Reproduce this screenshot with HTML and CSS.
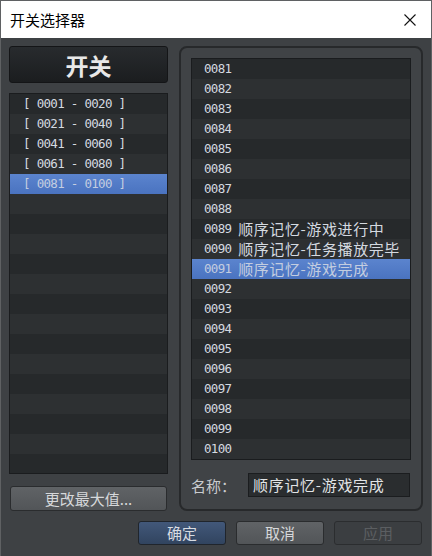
FILE: index.html
```html
<!DOCTYPE html>
<html>
<head>
<meta charset="utf-8">
<title>开关选择器</title>
<link rel="stylesheet" href="styles.css">
</head>
<body>
<div class="window">
  <div class="titlebar">
    <span class="title">开关选择器</span>
    <svg class="close" width="12" height="12" viewBox="0 0 12 12"><path d="M0.5 0.5 L11.5 11.5 M11.5 0.5 L0.5 11.5" stroke="#111" stroke-width="1.1" fill="none"/></svg>
  </div>
  <div class="content">
    <div class="main">
      <div class="left">
        <div class="header">开关</div>
        <div class="list left-list">
          <div class="row"><span class="num">[ 0001 - 0020 ]</span></div>
          <div class="row"><span class="num">[ 0021 - 0040 ]</span></div>
          <div class="row"><span class="num">[ 0041 - 0060 ]</span></div>
          <div class="row"><span class="num">[ 0061 - 0080 ]</span></div>
          <div class="row selected"><span class="num">[ 0081 - 0100 ]</span></div>
          <div class="row"></div>
          <div class="row"></div>
          <div class="row"></div>
          <div class="row"></div>
          <div class="row"></div>
          <div class="row"></div>
          <div class="row"></div>
          <div class="row"></div>
          <div class="row"></div>
          <div class="row"></div>
          <div class="row"></div>
          <div class="row"></div>
          <div class="row"></div>
          <div class="row"></div>
        </div>
        <button class="btn">更改最大值...</button>
      </div>
      <div class="frame">
        <div class="list right-list">
          <div class="row"><span class="num">0081</span></div>
          <div class="row"><span class="num">0082</span></div>
          <div class="row"><span class="num">0083</span></div>
          <div class="row"><span class="num">0084</span></div>
          <div class="row"><span class="num">0085</span></div>
          <div class="row"><span class="num">0086</span></div>
          <div class="row"><span class="num">0087</span></div>
          <div class="row"><span class="num">0088</span></div>
          <div class="row"><span class="num">0089 </span><span class="name">顺序记忆-游戏进行中</span></div>
          <div class="row"><span class="num">0090 </span><span class="name">顺序记忆-任务播放完毕</span></div>
          <div class="row selected"><span class="num">0091 </span><span class="name">顺序记忆-游戏完成</span></div>
          <div class="row"><span class="num">0092</span></div>
          <div class="row"><span class="num">0093</span></div>
          <div class="row"><span class="num">0094</span></div>
          <div class="row"><span class="num">0095</span></div>
          <div class="row"><span class="num">0096</span></div>
          <div class="row"><span class="num">0097</span></div>
          <div class="row"><span class="num">0098</span></div>
          <div class="row"><span class="num">0099</span></div>
          <div class="row"><span class="num">0100</span></div>
        </div>
        <div class="name-row">
          <span class="label">名称：</span>
          <div class="input">顺序记忆-游戏完成</div>
        </div>
      </div>
    </div>
    <div class="buttons">
      <button class="btn primary">确定</button>
      <button class="btn">取消</button>
      <button class="btn disabled">应用</button>
    </div>
  </div>
</div>
</body>
</html>
```

FILE: styles.css
```css
* { box-sizing: border-box; }

html, body {
  margin: 0;
  padding: 0;
  background: #3e4144;
}

body {
  font-family: "Noto Sans CJK SC", "Noto Sans", sans-serif;
}

.window {
  width: 432px;
  height: 556px;
  display: flex;
  flex-direction: column;
  background: #3e4144;
  border: 1px solid #5f6163;
  border-bottom: none;
  overflow: hidden;
}

.titlebar {
  height: 37px;
  flex: none;
  background: #ffffff;
  display: flex;
  align-items: center;
  justify-content: space-between;
  padding: 0 15px 0 9px;
}

.title {
  font-size: 15px;
  color: #000;
  line-height: 20px;
}

.close {
  display: block;
}

.content {
  display: flex;
  flex-direction: column;
  padding: 8px 8px 0 8px;
}

.main {
  display: flex;
  gap: 11px;
  height: 465px;
}

.left {
  width: 159px;
  display: flex;
  flex-direction: column;
  gap: 10px;
}

.header {
  height: 37px;
  flex: none;
  display: flex;
  align-items: center;
  justify-content: center;
  background: linear-gradient(#282b2e, #1b1d1f);
  border: 1px solid #141517;
  border-radius: 3px;
  color: #e8e8e8;
  font-size: 23px;
  font-weight: bold;
}

.list {
  background: #25282a;
  border: 1px solid #1a1c1e;
  overflow: hidden;
}

.left-list {
  flex: 1;
  margin-bottom: 2px;
}

.row {
  height: 20px;
  line-height: 20px;
  white-space: nowrap;
  color: #d5dae0;
  display: flex;
  align-items: center;
}

.row:nth-child(odd) { background: #26292b; }
.row:nth-child(even) { background: #2d3032; }

.row.selected {
  background: linear-gradient(#5b84ce, #4a73c0);
  color: #c3cde0;
}

.left-list .row { padding-left: 13px; }
.right-list .row { padding-left: 12px; }

.num {
  font-family: "DejaVu Sans Mono", monospace;
  font-size: 12.5px;
  letter-spacing: -0.7px;
  white-space: pre;
}

.name {
  font-family: "Noto Sans CJK SC", sans-serif;
  font-size: 15px;
  letter-spacing: 0.6px;
  line-height: 20px;
}

.frame {
  width: 244px;
  border: 2px solid #27292b;
  border-radius: 8px;
  background: #404346;
  padding: 10px 10px 12px 10px;
  display: flex;
  flex-direction: column;
}

.right-list {
  height: 402px;
  flex: none;
}

.name-row {
  margin-top: 13px;
  height: 24px;
  display: flex;
  align-items: center;
}

.label {
  width: 57px;
  font-size: 15px;
  color: #c9cccf;
}

.input {
  width: 162px;
  height: 24px;
  background: #2a2d2f;
  border: 1px solid #1b1d1f;
  color: #e2e4e6;
  font-size: 15px;
  letter-spacing: 0.7px;
  line-height: 22px;
  padding-left: 4px;
  white-space: nowrap;
  overflow: hidden;
}

.btn {
  font-family: "Noto Sans CJK SC", sans-serif;
  font-size: 15px;
  height: 25px;
  padding: 0;
  line-height: 22px;
  color: #d6d8da;
  background: linear-gradient(#606366, #525558);
  border: 1px solid #2a2c2e;
  border-radius: 3px;
  flex: none;
}

.left .btn {
  width: 157px;
  margin-left: 1px;
}

.buttons {
  display: flex;
  justify-content: flex-end;
  gap: 10px;
  margin-top: 10px;
  padding-right: 1px;
}

.buttons .btn {
  width: 88px;
  height: 24px;
}

.btn.primary {
  background: linear-gradient(#42587a, #31445f);
  border-color: #20252c;
  color: #d8dce2;
}

.btn.disabled {
  background: #3b3e41;
  border-color: #2b2d2f;
  color: #5b5e61;
}
```
